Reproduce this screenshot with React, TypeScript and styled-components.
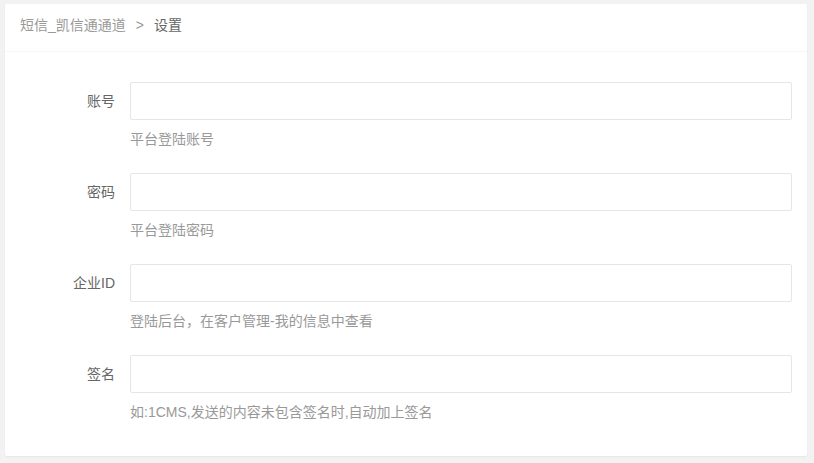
import React from 'react';
import styled, { createGlobalStyle } from 'styled-components';

const GlobalStyle = createGlobalStyle`
  html, body {
    margin: 0;
    padding: 0;
    background: #f2f2f2;
    font-family: "Helvetica Neue", "Liberation Sans", "Noto Sans CJK SC", sans-serif;
    font-size: 14px;
    color: #666;
  }
`

const Page = styled.div`
  padding: 4px 7px 7px 5px;
`

const Card = styled.div`
  background: #fff;
  border-radius: 2px;
  box-shadow: 0 1px 2px 0 rgba(0, 0, 0, 0.05);
`

const CardHeader = styled.div`
  height: 48px;
  line-height: 43px;
  padding: 0 15px;
  border-bottom: 1px solid #f6f6f6;
  box-sizing: border-box;
  color: #333;
`

const Crumb = styled.span<{ $current?: boolean }>`
  color: ${p => (p.$current ? '#666' : '#999')};
`

const Sep = styled.span`
  color: #999;
  margin: 0 10px;
`

const CardBody = styled.div`
  padding: 30px 15px 25px;
`

const FormItem = styled.div`
  display: flex;
  margin-bottom: 15px;
  &:last-child { margin-bottom: 0; }
`

const Label = styled.label`
  width: 110px;
  flex: none;
  box-sizing: border-box;
  padding: 9px 15px;
  line-height: 20px;
  text-align: right;
  color: #666;
`

const Block = styled.div`
  flex: 1;
`

const Input = styled.input`
  display: block;
  width: 100%;
  height: 38px;
  box-sizing: border-box;
  border: 1px solid #e6e6e6;
  border-radius: 2px;
  padding-left: 10px;
  font-size: 14px;
  outline: none;
  background: #fff;
`

const Aux = styled.div`
  padding: 9px 0;
  line-height: 20px;
  color: #999;
  font-size: 14px;
`

const fields = [
  { label: '账号', hint: '平台登陆账号' },
  { label: '密码', hint: '平台登陆密码', type: 'password' },
  { label: '企业ID', hint: '登陆后台，在客户管理-我的信息中查看' },
  { label: '签名', hint: '如:1CMS,发送的内容未包含签名时,自动加上签名' },
]

export default function App() {
  return (
    <>
      <GlobalStyle />
      <Page>
        <Card>
          <CardHeader>
            <Crumb>短信_凯信通通道</Crumb>
            <Sep>&gt;</Sep>
            <Crumb $current>设置</Crumb>
          </CardHeader>
          <CardBody>
            {fields.map(f => (
              <FormItem key={f.label}>
                <Label>{f.label}</Label>
                <Block>
                  <Input type={f.type || 'text'} />
                  <Aux>{f.hint}</Aux>
                </Block>
              </FormItem>
            ))}
          </CardBody>
        </Card>
      </Page>
    </>
  );
}
